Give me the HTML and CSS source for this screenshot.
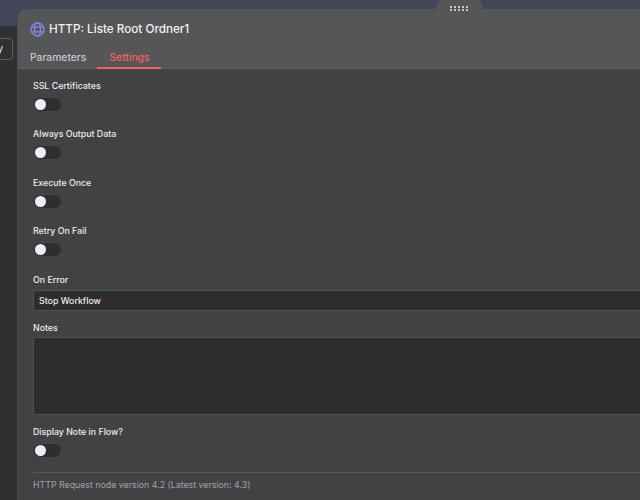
FILE: index.html
```html
<!DOCTYPE html>
<html lang="en">
<head>
<meta charset="utf-8">
<title>HTTP: Liste Root Ordner1</title>
<link rel="stylesheet" href="styles.css">
</head>
<body>
<div class="canvas">
  <div class="canvas-button">y</div>
  <div class="grip"><span class="grip-dots"><i></i><i></i><i></i><i></i><i></i><i></i><i></i><i></i><i></i><i></i></span></div>
  <main class="panel">
    <header class="panel-head">
      <div class="title-row">
        <svg class="globe" viewBox="0 0 16 16" width="15" height="15" fill="none" stroke="#8a83f0" stroke-width="1.4"><circle cx="8" cy="8" r="7"/><ellipse cx="8" cy="8" rx="3.2" ry="7"/><path d="M1.5 5.5h13M1.5 10.5h13"/></svg>
        <h1 class="title">HTTP: Liste Root Ordner1</h1>
      </div>
      <nav class="tabs">
        <span class="tab">Parameters</span>
        <span class="tab active">Settings</span>
      </nav>
    </header>
    <section class="body">
      <div class="field"><label class="label">SSL Certificates</label><span class="toggle"><span class="knob"></span></span></div>
      <div class="field"><label class="label">Always Output Data</label><span class="toggle"><span class="knob"></span></span></div>
      <div class="field"><label class="label">Execute Once</label><span class="toggle"><span class="knob"></span></span></div>
      <div class="field"><label class="label">Retry On Fail</label><span class="toggle"><span class="knob"></span></span></div>
      <div class="field field-select"><label class="label label-tight">On Error</label><div class="select">Stop Workflow</div></div>
      <div class="field field-notes"><label class="label label-notes">Notes</label><div class="textarea"></div></div>
      <div class="field"><label class="label">Display Note in Flow?</label><span class="toggle"><span class="knob"></span></span></div>
      <footer class="version">HTTP Request node version 4.2 (Latest version: 4.3)</footer>
    </section>
  </main>
</div>
</body>
</html>
```
FILE: styles.css
```css
* { box-sizing: border-box; }
html, body { margin: 0; height: 100%; overflow: hidden; }
body { font-family: Inter, "Liberation Sans", sans-serif; background: #2e2f30; }
.canvas {
  position: relative;
  width: 640px;
  height: 500px;
  padding: 9px 0 0 17px;
  overflow: hidden;
  background: linear-gradient(#45455a 0, #45455a 26px, #2f3031 26px);
}
.canvas-button {
  position: absolute;
  left: -20px;
  top: 38px;
  width: 33px;
  height: 22px;
  border: 1px solid #5a5b5d;
  border-radius: 3px;
  background: #2f3031;
  color: #e8e8ea;
  font-size: 10px;
  line-height: 19px;
  text-align: right;
  padding-right: 9px;
}
.grip {
  position: absolute;
  left: 436px;
  top: 0;
  width: 46px;
  height: 12px;
  background: #555657;
  border-radius: 6px 6px 0 0;
  display: flex;
  justify-content: center;
  padding-top: 6px;
}
.grip-dots { display: grid; grid-template-columns: repeat(5, 2px); grid-auto-rows: 2px; gap: 1px 2px; }
.grip-dots i { background: #c4c5c9; }
.panel {
  width: 700px;
  height: 491px;
  border-radius: 8px 0 0 0;
  background: #414243;
  border-left: 1px solid #4c4d4e;
}
.panel-head {
  height: 60px;
  background: #555657;
  border-bottom: 1px solid #606162;
  border-radius: 8px 0 0 0;
  padding: 12px 0 0 12px;
}
.title-row { display: flex; align-items: center; gap: 4px; height: 17px; }
.globe { flex: none; }
.title { margin: 0; color: #f1f1f2; font-size: 11.7px; font-weight: 500; line-height: 17px; }
.tabs { display: flex; margin-top: 12px; }
.tab {
  color: #c6c8ce;
  font-size: 10.3px;
  font-weight: 500;
  line-height: 15px;
  height: 19px;
  margin-right: 11px;
}
.tab.active {
  color: #f0645a;
  padding: 0 11.5px 0 12px;
  border-bottom: 2px solid #f0645a;
}
.body { padding: 10px 0 0 15px; }
.field { height: 48.4px; }
.field-select { height: 48px; }
.field-notes { height: 104px; }
.label {
  display: block;
  color: #ececed;
  font-size: 8.8px;
  font-weight: 500;
  line-height: 13px;
  margin-bottom: 5px;
}
.label-tight { margin-bottom: 4px; }
.label-notes { margin-bottom: 3px; }
.toggle {
  display: block;
  width: 29px;
  height: 15px;
  border: 1px solid #454647;
  border-radius: 8px;
  background: #2d2e2e;
  position: relative;
}
.knob {
  position: absolute;
  left: 1px;
  top: 1px;
  width: 11px;
  height: 11px;
  border-radius: 50%;
  background: #eeeef5;
}
.select, .textarea {
  width: 640px;
  background: #2c2d2c;
  border: 1px solid #505152;
  border-radius: 3px;
}
.select {
  height: 21px;
  color: #ececed;
  font-size: 8.8px;
  font-weight: 500;
  line-height: 19px;
  padding-left: 5px;
}
.textarea { height: 78px; }
.version {
  margin-top: -1px;
  border-top: 1px solid #555657;
  padding-top: 5px;
  color: #a2a3a8;
  font-size: 8.8px;
  line-height: 13px;
}
```
